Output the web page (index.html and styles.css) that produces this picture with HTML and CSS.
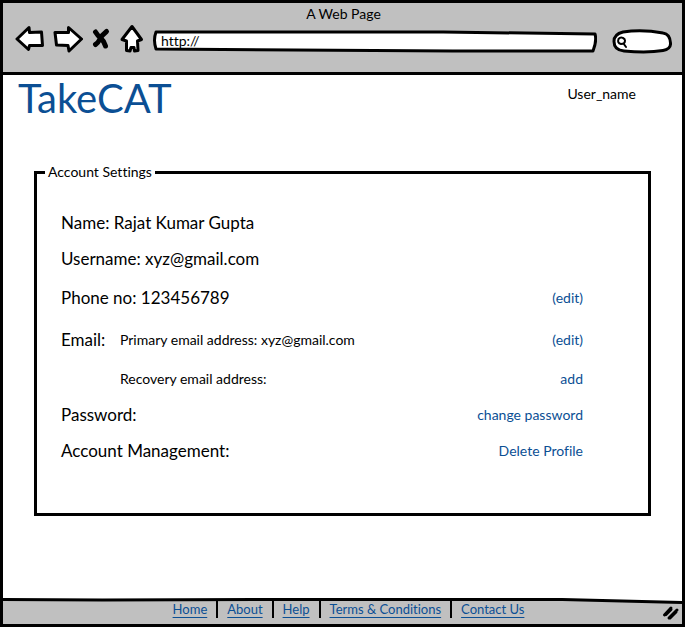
FILE: index.html
```html
<!DOCTYPE html>
<html lang="en">
<head>
<meta charset="utf-8">
<meta name="viewport" content="width=device-width, initial-scale=1">
<title>A Web Page</title>
<link rel="stylesheet" href="styles.css">
</head>
<body>
<div class="window">
  <header class="chrome">
    <div class="chrome-title">A Web Page</div>
    <div class="toolbar">
      <button class="tool" type="button" aria-label="Back">
        <svg width="30" height="30" viewBox="0 0 30 30"><path d="M2 15L14 3.500 14.500 8.500 26.500 8 27.500 21.500 14.500 21.500 13.500 25.500Z"/></svg>
      </button>
      <button class="tool" type="button" aria-label="Forward">
        <svg width="30" height="30" viewBox="0 0 30 30"><path d="M2 8.500L15.500 8.500 15.500 3.500 28.500 15 16 27 15 21.500 3.500 21Z"/></svg>
      </button>
      <button class="tool" type="button" aria-label="Stop">
        <svg width="20" height="30" viewBox="0 0 20 30"><path class="cross" d="M4.500 8Q7 12 10 14.500T14.500 22M15.500 7.500Q11 11 9 15T4.500 20.500"/></svg>
      </button>
      <button class="tool" type="button" aria-label="Home">
        <svg width="26" height="30" viewBox="0 0 26 30"><path d="M13 2.500L22.500 15.500 18.500 17 19 26.500 15.500 27 15 23.500 12 23.500 11 27 7.500 26.500 7.500 17 3 15.500Z"/></svg>
      </button>
      <div class="address">
        <svg class="outline" viewBox="0 0 444 24" preserveAspectRatio="none" aria-hidden="true"><path d="M3 3L290 3 442 5Q444 12 440 22L300 22 3 20Q0 11 3 3Z"/></svg>
        <input class="field" type="text" value="http://" aria-label="Address">
      </div>
      <div class="search">
        <svg class="outline" viewBox="0 0 60 26" preserveAspectRatio="none" aria-hidden="true"><path d="M11 4Q30 1 51 5Q58 6 58.500 15Q59 21 51 22.500Q36 25 12 23Q2 22 2 13.500Q2 6 11 4Z"/></svg>
        <svg class="lens" width="12" height="14" viewBox="0 0 12 14" aria-hidden="true"><path d="M8.500 4Q5 1 2.500 4Q1 8 5 9Q9 9 9 5.500Q9 4 7 3M7.500 8.500L10 12"/></svg>
        <input class="field" type="search" aria-label="Search">
      </div>
    </div>
  </header>

  <main class="page">
    <div class="masthead">
      <h1 class="brand">TakeCAT</h1>
      <span class="user">User_name</span>
    </div>
    <fieldset class="settings">
      <legend>Account Settings</legend>
      <div class="row"><span class="label">Name: Rajat Kumar Gupta</span></div>
      <div class="row"><span class="label">Username: xyz@gmail.com</span></div>
      <div class="row row-tall"><span class="label">Phone no: 123456789</span><a href="#">(edit)</a></div>
      <div class="row row-tall"><span class="label label-short">Email:</span><span class="detail">Primary email address: xyz@gmail.com</span><a href="#">(edit)</a></div>
      <div class="row"><span class="label-short"></span><span class="detail">Recovery email address:</span><a href="#">add</a></div>
      <div class="row"><span class="label">Password:</span><a href="#">change password</a></div>
      <div class="row"><span class="label">Account Management:</span><a href="#">Delete Profile</a></div>
    </fieldset>
  </main>

  <footer class="status">
    <svg class="status-bg" viewBox="0 0 680 26" preserveAspectRatio="none" aria-hidden="true"><path d="M0 1.500L100 2 300 1.500 560 1.500 680 4.500V26H0Z" fill="#c0c0c0"/><path d="M0 1.500L100 2 300 1.500 560 1.500 680 4.500" fill="none" stroke="#000" stroke-width="3"/></svg>
    <nav class="links">
      <a href="#">Home</a>
      <a href="#">About</a>
      <a href="#">Help</a>
      <a href="#">Terms &amp; Conditions</a>
      <a href="#">Contact Us</a>
    </nav>
    <svg class="grip" width="18" height="16" viewBox="0 0 18 16" aria-hidden="true"><path d="M2.500 10L9 3M4 9.500L9 4.500M7 13L15 5M8 13L14 7"/></svg>
  </footer>
</div>
</body>
</html>
```

FILE: styles.css
```css
* {
  box-sizing: border-box;
}

body {
  margin: 0;
  background: #fff;
  color: #000;
  font: 14px/18px Lato, "Open Sans", sans-serif;
  font-variant-ligatures: none;
}

a {
  color: #0b4f94;
}

.window {
  display: flex;
  flex-direction: column;
  min-height: 100vh;
  border: 3px solid #000;
}

.chrome {
  padding: 2px 10px 18px 12px;
  border-bottom: 3px solid #000;
  background: #c0c0c0;
}

.chrome-title {
  text-align: center;
}

.toolbar {
  display: flex;
  align-items: center;
}

.tool {
  display: block;
  margin: 0 8px 0 0;
  padding: 0;
  border: 0;
  background: none;
}

.tool svg {
  display: block;
  fill: #fff;
  stroke: #000;
  stroke-width: 3;
  stroke-linejoin: round;
  stroke-linecap: round;
}

.tool .cross {
  fill: none;
  stroke-width: 5;
}

.address,
.search {
  position: relative;
}

.address {
  flex: 1;
  height: 24px;
  margin-top: 5px;
}

.search {
  width: 60px;
  height: 26px;
  margin-top: 5px;
  margin-left: 15px;
}

.outline {
  position: absolute;
  inset: 0;
  width: 100%;
  height: 100%;
  fill: #fff;
  stroke: #000;
  stroke-width: 3;
  stroke-linejoin: round;
}

.lens {
  position: absolute;
  top: 7px;
  left: 4px;
  fill: none;
  stroke: #000;
  stroke-width: 2;
  stroke-linecap: round;
}

.field {
  position: relative;
  display: block;
  width: 100%;
  height: 100%;
  padding: 0 8px 2px;
  border: 0;
  outline: 0;
  background: none;
  color: inherit;
  font: inherit;
}

.search .field {
  padding-left: 18px;
}

.page {
  flex: 1;
  padding: 0 31px;
}

.masthead {
  display: flex;
  justify-content: space-between;
  padding: 1px 15px 0 0;
  margin-left: -16px;
}

.brand {
  margin: 0;
  color: #0b4f94;
  font-size: 40px;
  font-weight: 400;
  line-height: 44px;
}

.user {
  padding-top: 9px;
}

.settings {
  min-width: 0;
  min-height: 353px;
  margin: 43px 0 0;
  padding: 24px 65px 0 24px;
  border: 3px solid #000;
}

.settings legend {
  margin-left: -16px;
  padding: 0 3px;
}

.row {
  display: flex;
  align-items: center;
  height: 36px;
}

.row-tall {
  height: 42px;
}

.row a {
  margin-left: auto;
  text-decoration: none;
}

.label {
  font-size: 17px;
}

.label-short {
  width: 59px;
}

.status {
  position: relative;
  height: 26px;
}

.status-bg {
  position: absolute;
  inset: 0;
  width: 100%;
  height: 100%;
}

.links {
  position: relative;
  display: flex;
  justify-content: center;
  padding: 2px 0 0 12px;
  font-size: 13px;
}

.links a {
  padding: 0 9px;
  text-underline-offset: 3px;
}

.links a + a {
  border-left: 2px solid #000;
}

.grip {
  position: absolute;
  right: 2px;
  bottom: 3px;
  fill: none;
  stroke: #000;
  stroke-width: 3;
  stroke-linecap: round;
}
```
